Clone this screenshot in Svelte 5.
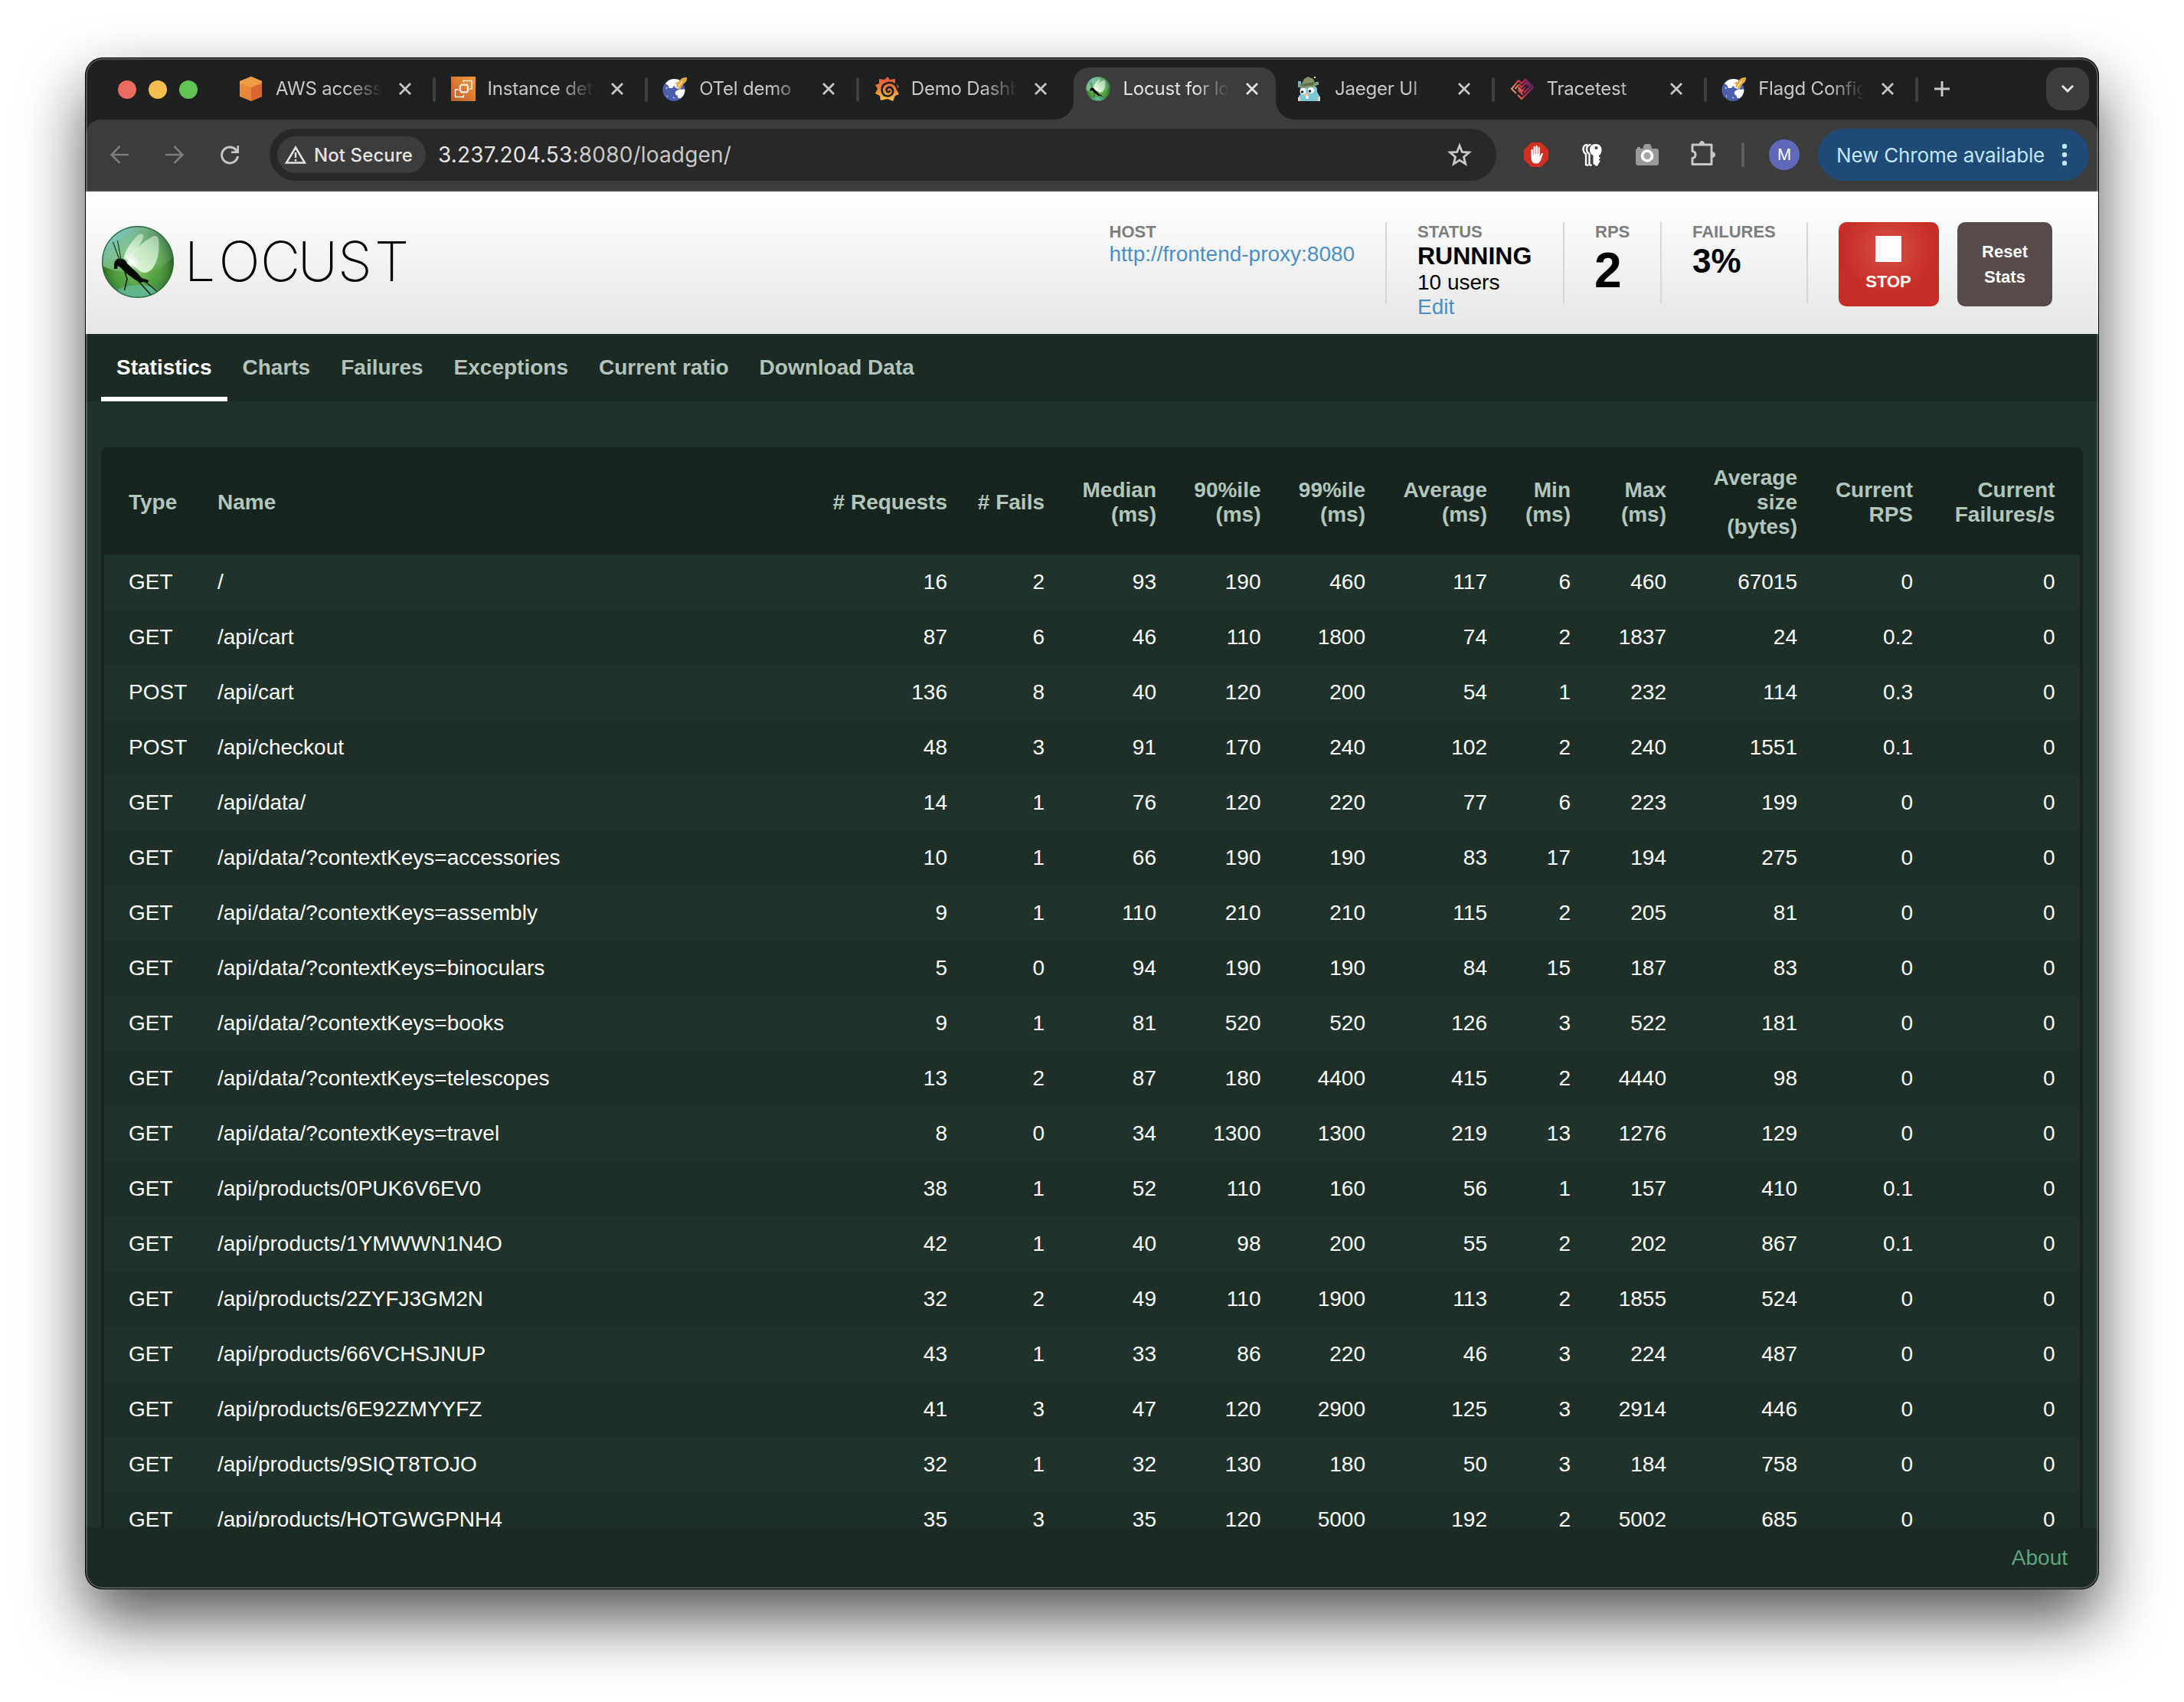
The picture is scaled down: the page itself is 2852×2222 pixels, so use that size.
<script>
  const tabs = [
    { icon: 'aws', title: 'AWS access' },
    { icon: 'ec2', title: 'Instance det' },
    { icon: 'globe', title: 'OTel demo' },
    { icon: 'grafana', title: 'Demo Dashb' },
    { icon: 'locust', title: 'Locust for lo', active: true },
    { icon: 'jaeger', title: 'Jaeger UI' },
    { icon: 'tracetest', title: 'Tracetest' },
    { icon: 'globe', title: 'Flagd Config' }
  ];

  const views = ['Statistics', 'Charts', 'Failures', 'Exceptions', 'Current ratio', 'Download Data'];

  const columns = [
    'Type', 'Name', '# Requests', '# Fails', 'Median\n(ms)', '90%ile\n(ms)', '99%ile\n(ms)',
    'Average\n(ms)', 'Min\n(ms)', 'Max\n(ms)', 'Average\nsize\n(bytes)', 'Current\nRPS', 'Current\nFailures/s'
  ];

  const rows = [
    ['GET', '/', 16, 2, 93, 190, 460, 117, 6, 460, 67015, 0, 0],
    ['GET', '/api/cart', 87, 6, 46, 110, 1800, 74, 2, 1837, 24, 0.2, 0],
    ['POST', '/api/cart', 136, 8, 40, 120, 200, 54, 1, 232, 114, 0.3, 0],
    ['POST', '/api/checkout', 48, 3, 91, 170, 240, 102, 2, 240, 1551, 0.1, 0],
    ['GET', '/api/data/', 14, 1, 76, 120, 220, 77, 6, 223, 199, 0, 0],
    ['GET', '/api/data/?contextKeys=accessories', 10, 1, 66, 190, 190, 83, 17, 194, 275, 0, 0],
    ['GET', '/api/data/?contextKeys=assembly', 9, 1, 110, 210, 210, 115, 2, 205, 81, 0, 0],
    ['GET', '/api/data/?contextKeys=binoculars', 5, 0, 94, 190, 190, 84, 15, 187, 83, 0, 0],
    ['GET', '/api/data/?contextKeys=books', 9, 1, 81, 520, 520, 126, 3, 522, 181, 0, 0],
    ['GET', '/api/data/?contextKeys=telescopes', 13, 2, 87, 180, 4400, 415, 2, 4440, 98, 0, 0],
    ['GET', '/api/data/?contextKeys=travel', 8, 0, 34, 1300, 1300, 219, 13, 1276, 129, 0, 0],
    ['GET', '/api/products/0PUK6V6EV0', 38, 1, 52, 110, 160, 56, 1, 157, 410, 0.1, 0],
    ['GET', '/api/products/1YMWWN1N4O', 42, 1, 40, 98, 200, 55, 2, 202, 867, 0.1, 0],
    ['GET', '/api/products/2ZYFJ3GM2N', 32, 2, 49, 110, 1900, 113, 2, 1855, 524, 0, 0],
    ['GET', '/api/products/66VCHSJNUP', 43, 1, 33, 86, 220, 46, 3, 224, 487, 0, 0],
    ['GET', '/api/products/6E92ZMYYFZ', 41, 3, 47, 120, 2900, 125, 3, 2914, 446, 0, 0],
    ['GET', '/api/products/9SIQT8TOJO', 32, 1, 32, 130, 180, 50, 3, 184, 758, 0, 0],
    ['GET', '/api/products/HQTGWGPNH4', 35, 3, 35, 120, 5000, 192, 2, 5002, 685, 0, 0]
  ];
</script>

{#snippet locustMark()}
  <svg viewBox="0 0 94 94">
    <defs>
      <linearGradient id="lc-base" x1="0" y1="0" x2="0" y2="1">
        <stop offset="0" stop-color="#7cc0a6" />
        <stop offset="0.35" stop-color="#7fbf83" />
        <stop offset="0.6" stop-color="#5aa544" />
        <stop offset="0.82" stop-color="#4c9a48" />
        <stop offset="1" stop-color="#62b8a4" />
      </linearGradient>
      <radialGradient id="lc-dark" cx="0.5" cy="0.62" r="0.55">
        <stop offset="0" stop-color="#8fd06a" stop-opacity="0.9" />
        <stop offset="0.55" stop-color="#4c9a35" stop-opacity="0.35" />
        <stop offset="1" stop-color="#08300a" stop-opacity="0.85" />
      </radialGradient>
      <linearGradient id="lc-sky" x1="0" y1="0.1" x2="0.9" y2="0.8">
        <stop offset="0" stop-color="#86dcf0" />
        <stop offset="0.45" stop-color="#8ccb9b" stop-opacity="0.75" />
        <stop offset="1" stop-color="#6fb568" stop-opacity="0.3" />
      </linearGradient>
      <linearGradient id="lc-wing" x1="0.8" y1="0" x2="0.2" y2="1">
        <stop offset="0" stop-color="#d6f0d4" stop-opacity="0.6" />
        <stop offset="1" stop-color="#f2fff0" stop-opacity="0.9" />
      </linearGradient>
      <radialGradient id="lc-glow">
        <stop offset="0" stop-color="#fff" />
        <stop offset="1" stop-color="#fff" stop-opacity="0" />
      </radialGradient>
      <clipPath id="lc-clip"><circle cx="47" cy="47" r="46.4" /></clipPath>
    </defs>
    <g clip-path="url(#lc-clip)">
      <circle cx="47" cy="47" r="47" fill="url(#lc-base)" />
      <circle cx="47" cy="47" r="47" fill="url(#lc-dark)" />
      <path d="M0 0H94V38Q80 60 50 60Q20 62 0 52Z" fill="url(#lc-sky)" />
      <ellipse cx="47" cy="90" rx="30" ry="13" fill="#6cc7b4" opacity="0.55" />
      <path d="M29 42Q30 30 46 13Q52 8 54 12Q56 18 35 45Z" fill="url(#lc-wing)" />
      <path d="M34 46Q44 26 66 14Q73 10 74.500 20Q76 42 66 56Q56 66 46 56Z" fill="url(#lc-wing)" />
      <circle cx="38" cy="48" r="12" fill="url(#lc-glow)" />
      <path d="M16 56V50Q17 42 24 42.500Q31 43 33 49L46 61L52 68L61 71L60 74L53 73L50 74L43 70L31 61L24 54L21 52L20 56Z" fill="#060a05" />
      <path d="M23 44L14.500 21M25 44L20.500 19" stroke="#1a3a28" stroke-width="1.200" fill="none" />
      <path d="M30 60L33 69L29.500 84M46 70L64 90M52 69L73 86" stroke="#12241c" stroke-width="1.600" fill="none" />
    </g>
    <circle cx="47" cy="47" r="46.300" fill="none" stroke="#2d6b3c" stroke-width="1.400" />
  </svg>
{/snippet}

{#snippet favicon(name)}
  {#if name === 'aws'}
    <svg class="favicon" viewBox="0 0 32 32">
      <path d="M16 0L30 6V26L16 32L1 26V6Z" fill="#e8883a" />
      <path d="M16 0L30 6V9L16 14L1 9V6Z" fill="#ee9d45" />
      <path d="M16 14L30 9V26L16 32Z" fill="#d9662f" />
    </svg>
  {:else if name === 'ec2'}
    <svg class="favicon" viewBox="0 0 32 32">
      <defs>
        <linearGradient id="ec2-bg" x1="0" y1="1" x2="1" y2="0">
          <stop offset="0" stop-color="#c4592b" /><stop offset="1" stop-color="#f39b35" />
        </linearGradient>
      </defs>
      <path d="M0 0H32V32H0Z" fill="url(#ec2-bg)" />
      <g fill="none" stroke="#fff" stroke-width="1.300">
        <path d="M12.500 11H21.500V20H12.500ZM14 11V9M17 11V9M20 11V9M14 22V20M17 22V20M20 22V20M12.500 13H10.500M12.500 15.500H10.500M12.500 18H10.500M23.500 13H21.500M23.500 15.500H21.500M23.500 18H21.500" />
        <path d="M16 7.500V5.500H27V16H24.500M9.500 17H5.500V26.500H16.500V23.500" />
      </g>
    </svg>
  {:else if name === 'globe'}
    <svg class="favicon" viewBox="0 0 32 32">
      <circle cx="15" cy="17.500" r="14.500" fill="#4b5fad" />
      <path d="M4 9Q8 3 16 3L22 4L25 14Q22 17 18 15L15 12L13 15L9 15Q7 13 8 12Z" fill="#fff" />
      <path d="M17 20Q21 15 26 17Q29 15 29.500 18Q29 24 24 28Q19 29 20 25Q16 24 17 20Z" fill="#fff" />
      <path d="M5 14l1 2M6 25l1 1M14 27l2 1" stroke="#dfe4ff" stroke-width="1.200" />
      <path d="M32 1Q33 6 27 10L23 17L21 14L18 14L19 10L16 8L21 7Q25 0 32 1Z" fill="#eda83a" />
      <path d="M26 6L21 13" stroke="#fff" stroke-width="1.200" />
    </svg>
  {:else if name === 'grafana'}
    <svg class="favicon" viewBox="0 0 32 32">
      <defs>
        <linearGradient id="gf-bg" x1="0" y1="0" x2="0" y2="1">
          <stop offset="0" stop-color="#e5533a" /><stop offset="0.5" stop-color="#e8803a" /><stop offset="1" stop-color="#f4c746" />
        </linearGradient>
      </defs>
      <path d="M17 0L20 4L27 3L27 9L32 13L29 17L32 23L27 25L24 32L17 29L8 31L7 25L1 22L4 16L1 11L6 9L6 3L13 4Z" fill="url(#gf-bg)" />
      <path d="M30 17Q28 7 18 8Q9 10 9.500 18Q11 26 18 25.500Q25 24 24 17.500Q22 13 18 14Q14.500 16 16 19Q18 21.500 20 19" fill="none" stroke="#1f2120" stroke-width="2.600" stroke-linecap="round" />
    </svg>
  {:else if name === 'locust'}
    <span class="favicon">{@render locustMark()}</span>
  {:else if name === 'jaeger'}
    <svg class="favicon" viewBox="0 0 32 32">
      <path d="M3 17Q3 12 9 12H21Q26 14 25 20L28 25V32H1V25L3 24Z" fill="#7cc7dc" />
      <path d="M0 6H4V14H0ZM23 7H27V11H23Z" fill="#6bb8cf" />
      <path d="M8 3L13 0L20 3L22 8L27 8V10L20 14L3 15L1 11L5 9Z" fill="#85956a" />
      <path d="M4 10L21 7L20 11L5 13Z" fill="#5f6d49" />
      <path d="M21 0h2v2h-2z" fill="#e9e4d2" />
      <circle cx="6.500" cy="19" r="4" fill="#fff" /><circle cx="17" cy="18" r="4" fill="#fff" />
      <circle cx="5.500" cy="20" r="1.800" fill="#16262c" /><circle cx="15.500" cy="19" r="1.800" fill="#16262c" />
      <path d="M8 23L12 21L15 24L12 26H9Z" fill="#e3c6a0" /><path d="M10.500 25h3v4h-3z" fill="#fff" />
      <path d="M0 27h3v5H0zM26 26h3v6h-3z" fill="#e3d3b6" />
    </svg>
  {:else if name === 'tracetest'}
    <svg class="favicon" viewBox="0 0 32 32">
      <defs>
        <linearGradient id="tt-line" x1="0" y1="0.6" x2="1" y2="0.3">
          <stop offset="0" stop-color="#f39a6b" /><stop offset="0.5" stop-color="#d8304a" /><stop offset="1" stop-color="#6b2070" />
        </linearGradient>
      </defs>
      <g fill="none" stroke="url(#tt-line)" stroke-width="2">
        <path d="M10 17L17 24M10 24L15 29L30 14L20 4L15 9L11 5L2 16L8 22" />
        <path d="M12 10L6.500 16M18 21L26 13.500L20.500 8L15 14L12 10" />
        <path d="M11 14L15.500 19L20 13.500" stroke-width="2.600" />
      </g>
    </svg>
  {/if}
{/snippet}

<main class="desktop">
  <div class="window">
    <div class="tab-strip">
      <div class="lights"><i class="red"></i><i class="yellow"></i><i class="green"></i></div>
      {#each tabs as tab, i}
        <div class="tab" class:active={tab.active} class:divided={!tab.active && !tabs[i + 1]?.active}>
          {@render favicon(tab.icon)}
          <span class="title">{tab.title}</span>
          <svg class="close" viewBox="0 0 16 16"><path d="M1 1L15 15M15 1L1 15" /></svg>
        </div>
      {/each}
      <svg class="plus" viewBox="0 0 20 20"><path d="M10 0V20M0 10H20" /></svg>
      <div class="tab-search"><svg viewBox="0 0 16 10"><path d="M1 1L8 8L15 1" /></svg></div>
    </div>

    <div class="toolbar">
      <svg class="nav dim" viewBox="0 0 24 24"><path d="M24 12H2M12.500 1L1.500 12L12.500 23" /></svg>
      <svg class="nav dim" viewBox="0 0 24 24"><path d="M0 12H22M11.500 1L22.500 12L11.500 23" /></svg>
      <svg class="nav reload" viewBox="0 0 24 24"><path d="M22.500 14A10.500 10.500 0 1 1 20 5.500L22 8" /><path class="solid" d="M24 0V10H14V7.500H18L21.500 4V0Z" /></svg>
      <div class="omnibox">
        <div class="chip">
          <svg viewBox="0 0 28 24"><path d="M14 2.500L26 22.500H2Z" /><path d="M14 9V16M14 18V20.500" /></svg>
          <span>Not Secure</span>
        </div>
        <span class="url">3.237.204.53<em>:8080/loadgen/</em></span>
        <svg class="star" viewBox="0 0 32 32"><path d="M16 4L19.300 12.300L28.500 13L21.500 18.900L23.700 28L16 23.100L8.300 28L10.500 18.900L3.500 13L12.700 12.300Z" /></svg>
      </div>
      <svg class="ext hand" viewBox="0 0 32 32">
        <path d="M9.500 0H22.500L32 9.500V22.500L22.500 32H9.500L0 22.500V9.500Z" fill="#d02f23" />
        <path d="M9.500 10Q9.500 8.700 10.600 8.700T11.800 10V16H12.500V6Q12.500 4.800 13.600 4.800T14.800 6V15H15.500V5Q15.500 3.800 16.600 3.800T17.800 5V15H18.500V7Q18.500 5.800 19.600 5.800T20.800 7V18L22.500 15Q23.500 13.500 25 14.500L22.500 22Q20.500 27.500 16 27.500Q9.500 27.500 9.500 20Z" fill="#fff" />
      </svg>
      <svg class="ext keys" viewBox="0 0 26 30">
        <g fill="none" stroke="#fff" stroke-width="2.400">
          <path d="M7 2Q1.500 2 1.500 8Q1.500 12 5 14V28L8 29" />
          <path d="M11.500 2Q6 2 6 8Q6 12 9.500 14V28L12.500 29" />
        </g>
        <path d="M17.500 1Q25.500 1 25.500 9Q25.500 13.500 22 16V17.500L24 19.500L21.500 21.500L24 23.500L21.500 26V27.500L19 30L14.500 27V16Q10 13.500 10 9Q10 1 17.500 1Z" fill="#fff" />
        <circle cx="18.500" cy="6" r="2" fill="#3c3c3c" />
      </svg>
      <svg class="ext camera" viewBox="0 0 30 28">
        <path d="M2 6V4H6V6H9L11 1Q11.500 0 13 0H18Q19 0 19.500 1L21.500 6H27Q30 6 30 9V25Q30 28 27 28H3Q0 28 0 25V9Q0 6 2 6Z" fill="#9a9a9a" />
        <circle cx="15" cy="15.500" r="6.500" fill="#a5a5a5" stroke="#fff" stroke-width="3.500" />
      </svg>
      <svg class="ext puzzle" viewBox="0 0 32 32">
        <path d="M2 5H27V30.500H2V22.500Q6 22 6 18T2 13.500Z" fill="none" stroke="#c7c7c7" stroke-width="3" stroke-linejoin="round" />
        <path d="M11 5Q11 0 14.500 0T18 5ZM27 14Q32 14 32 18T27 22Z" fill="#c7c7c7" />
      </svg>
      <span class="bar"></span>
      <span class="avatar">M</span>
      <div class="update">
        <span>New Chrome available</span>
        <svg viewBox="0 0 8 30"><circle cx="4" cy="4" r="3.200" /><circle cx="4" cy="15" r="3.200" /><circle cx="4" cy="26" r="3.200" /></svg>
      </div>
    </div>

    <header class="masthead">
      <div class="mark">{@render locustMark()}</div>
      <svg class="wordmark" viewBox="0 0 300 72">
        <text y="62" x="14 65.5 119 168 216.5 264.5">LOCUST</text>
      </svg>
      <div class="stats">
        <div class="stat host"><h2>HOST</h2><p class="link">http://frontend-proxy:8080</p></div>
        <div class="stat status"><h2>STATUS</h2><p class="state">RUNNING</p><p>10 users</p><p class="link">Edit</p></div>
        <div class="stat rps"><h2>RPS</h2><p class="big">2</p></div>
        <div class="stat failures"><h2>FAILURES</h2><p class="mid">3%</p></div>
      </div>
      <button class="stop"><i></i>STOP</button>
      <button class="reset">Reset<br />Stats</button>
    </header>

    <nav class="views">
      {#each views as view, i}
        <span class:current={i === 0}>{view}</span>
      {/each}
    </nav>

    <section class="content">
      <div class="table">
        <div class="row head">
          {#each columns as column}<span>{column}</span>{/each}
        </div>
        {#each rows as row}
          <div class="row">
            {#each row as cell}<span>{cell}</span>{/each}
          </div>
        {/each}
      </div>
    </section>

    <footer>About</footer>
  </div>
</main>

<style>
  :global(body) { margin: 0; background: #fff; }
  * { box-sizing: border-box; }
  svg { display: block; overflow: visible; }
  h2, p { margin: 0; font-weight: 400; }

  .desktop {
    width: 2852px;
    height: 2222px;
    padding: 76px 112px 0;
    overflow: hidden;
    font-family: "Liberation Sans", Arial, sans-serif;
  }
  .window {
    position: relative;
    display: flex;
    flex-direction: column;
    width: 2628px;
    height: 1998px;
    border-radius: 22px;
    overflow: hidden;
    background: #1f2120;
    box-shadow: 0 0 0 1px #000, 0 40px 84px rgba(0, 0, 0, 0.68);
  }
  .window::after {
    content: "";
    position: absolute;
    inset: 0;
    border-radius: 22px;
    box-shadow: inset 0 0 0 2px rgba(255, 255, 255, 0.22);
    pointer-events: none;
  }

  .tab-strip {
    display: flex;
    align-items: center;
    height: 80px;
    padding: 0 12px 0 42px;
    font-family: Inter, sans-serif;
    font-size: 24px;
    color: #c7c7c7;
  }
  .lights { display: flex; gap: 16px; width: 142px; padding-top: 2px; }
  .lights i { width: 24px; height: 24px; border-radius: 50%; }
  .red { background: #ed6a5e; }
  .yellow { background: #f4bf4f; }
  .green { background: #61c554; }
  .tab {
    position: relative;
    display: flex;
    align-items: center;
    flex: none;
    width: 264px;
    height: 68px;
    margin: 12px 12.6px 0 0;
    padding: 0 0 12px 16px;
  }
  .tab.active { background: #3c3c3c; color: #e3e3e3; border-radius: 20px 20px 0 0; }
  .tab.active::before, .tab.active::after {
    content: "";
    position: absolute;
    bottom: 0;
    width: 24px;
    height: 24px;
  }
  .tab.active::before { right: 100%; background: radial-gradient(circle at 0 0, transparent 23.5px, #3c3c3c 24px); }
  .tab.active::after { left: 100%; background: radial-gradient(circle at 100% 0, transparent 23.5px, #3c3c3c 24px); }
  .tab.divided::after {
    content: "";
    position: absolute;
    left: 269px;
    top: 13px;
    width: 4px;
    height: 32px;
    border-radius: 2px;
    background: #3f403f;
  }
  .favicon { flex: none; width: 32px; height: 32px; margin-right: 16px; }
  .title {
    flex: none;
    width: 146px;
    margin-right: 15px;
    padding-bottom: 2px;
    white-space: nowrap;
    letter-spacing: -0.2px;
    mask-image: linear-gradient(90deg, #000 94px, transparent 139px);
  }
  .close { width: 16px; height: 16px; fill: none; stroke: currentColor; stroke-width: 2.8; }
  .plus { width: 20px; height: 20px; margin-left: 17px; fill: none; stroke: currentColor; stroke-width: 3; }
  .tab-search {
    display: grid;
    place-items: center;
    width: 56px;
    height: 56px;
    margin-left: auto;
    border-radius: 20px;
    background: #3c3c3c;
  }
  .tab-search svg { width: 16px; height: 10px; fill: none; stroke: #e3e3e3; stroke-width: 3; }

  .toolbar {
    display: flex;
    align-items: center;
    height: 94px;
    padding: 0 12px 0 32px;
    border-bottom: 2px solid #484848;
    border-radius: 20px 20px 0 0;
    background: #3c3c3c;
    font-family: Inter, sans-serif;
  }
  .nav { width: 24px; height: 24px; margin-right: 48px; fill: none; stroke: #c7c7c7; stroke-width: 3; }
  .nav.dim { stroke: #7b7b7b; stroke-width: 2.6; }
  .nav.reload { margin-right: 40px; }
  .solid { fill: #c7c7c7; stroke: none; }
  .omnibox {
    display: flex;
    align-items: center;
    width: 1602px;
    height: 68px;
    padding: 0 32px 0 10px;
    border-radius: 34px;
    background: #282828;
  }
  .chip {
    display: flex;
    align-items: center;
    gap: 10px;
    width: 194px;
    height: 48px;
    padding-left: 10px;
    border-radius: 24px;
    background: #3c3c3c;
    color: #e3e3e3;
    font-size: 24px;
    font-weight: 500;
    white-space: nowrap;
    letter-spacing: 0.1px;
  }
  .chip svg { flex: none; width: 28px; height: 24px; fill: none; stroke: #e3e3e3; stroke-width: 2.5; }
  .url { margin-left: 16px; font-size: 28px; color: #e3e3e3; letter-spacing: 0.18px; }
  .url em { font-style: normal; color: #c7c7c7; }
  .star { width: 32px; height: 32px; margin-left: auto; fill: none; stroke: #c7c7c7; stroke-width: 2.8; }
  .ext { flex: none; }
  .hand { width: 32px; height: 32px; margin-left: 36px; }
  .keys { width: 26px; height: 30px; margin-left: 44px; }
  .camera { width: 30px; height: 28px; margin-left: 44px; }
  .puzzle { width: 32px; height: 32px; margin: 0 34px 4px 42px; }
  .bar { width: 4px; height: 32px; border-radius: 2px; background: #5f5f5f; }
  .avatar {
    display: grid;
    place-items: center;
    width: 40px;
    height: 40px;
    margin: 0 24px 0 32px;
    border-radius: 50%;
    background: #5f69ba;
    color: #fff;
    font-size: 20px;
  }
  .update {
    display: flex;
    align-items: center;
    justify-content: space-between;
    width: 354px;
    height: 68px;
    padding: 0 28px 0 24px;
    border-radius: 34px;
    background: #1f4a75;
    color: #c2e7ff;
    font-size: 26px;
    letter-spacing: -0.16px;
    white-space: nowrap;
  }
  .update svg { width: 8px; height: 30px; fill: #c2e7ff; }

  .masthead {
    display: flex;
    height: 186px;
    padding: 40px 60px 0 20px;
    background: linear-gradient(#fff, #e6e6e6);
    color: #000;
  }
  .mark { width: 94px; height: 94px; margin: 5px 0 0 1px; }
  .wordmark { width: 300px; height: 72px; margin: 15px 0 0 20px; }
  .wordmark text { font-family: Inter, sans-serif; font-weight: 200; font-size: 72px; fill: #000; text-anchor: middle; }
  .stats { display: flex; width: 912.5px; margin-left: auto; }
  .stat { height: 106px; padding-left: 40px; border-right: 2px solid #d8d8d8; white-space: nowrap; font-size: 28px; line-height: 32px; }
  .stat.host { width: 362.5px; padding-left: 0; }
  .stat.status { width: 232px; }
  .stat.rps { width: 127px; }
  .stat.failures { width: 191px; }
  h2 { margin-bottom: 1px; font-size: 22px; font-weight: 700; line-height: 25px; color: #7d7d7d; }
  .link { color: #4b90c4; }
  .state { margin-bottom: 1px; font-size: 32px; font-weight: 700; line-height: 36px; }
  .big { margin-left: -1px; font-size: 64px; font-weight: 700; line-height: 74px; }
  .mid { font-size: 44px; font-weight: 700; line-height: 50px; }
  button {
    height: 110px;
    padding: 0;
    border: 0;
    border-radius: 10px;
    color: #fff;
    font: 700 22px/33px "Liberation Sans", Arial, sans-serif;
  }
  .stop {
    display: flex;
    flex-direction: column;
    align-items: center;
    width: 131px;
    margin: 0 24px 0 40px;
    padding: 18px 1px 0 0;
    background: radial-gradient(circle at 50% 32%, #d35048 0, #cc382e 40px, #c62d24 62px);
  }
  .stop i { width: 34px; height: 34px; margin-bottom: 9px; background: #fff; }
  .reset { width: 124px; background: #584b4b; }

  .views {
    display: flex;
    height: 88px;
    padding-left: 20px;
    background: #1b2a23;
    color: #b3c3bc;
    font-size: 28px;
    font-weight: 700;
    line-height: 88px;
  }
  .views span { padding: 0 20px; }
  .views .current { color: #fff; box-shadow: inset 0 -6px #fff; }

  .content { height: 1470px; padding: 60px 20px 0; overflow: hidden; background: #20332b; }
  .table { border: 4px solid #18251f; border-top: 0; border-radius: 8px 8px 0 0; overflow: hidden; }
  .row {
    display: grid;
    grid-template-columns: 116px 754px 199px 127px 146px 136.5px 136.5px 159px 109px 125px 171px 151px 185.5px;
    align-items: center;
    height: 72px;
    padding-left: 32px;
    color: #fff;
    font-size: 28px;
    line-height: 32px;
    white-space: pre;
  }
  .row:nth-child(odd) { background: #1e2f28; }
  .row span:nth-child(n + 3) { text-align: right; }
  .row.head { height: 140px; padding-top: 4px; background: #18251f; color: #b1c6bc; font-weight: 700; }

  footer {
    flex: 1;
    padding-right: 40px;
    background: #1b2a23;
    color: #5aa482;
    font-size: 28px;
    line-height: 80px;
    text-align: right;
  }
</style>
